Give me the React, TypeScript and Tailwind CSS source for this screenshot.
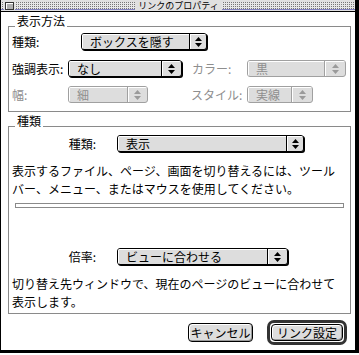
import React from "react";
import clsx from "clsx";

const font = "font-['Noto_Sans_CJK_JP','Noto_Sans',sans-serif]";

interface PopupProps {
  label: string;
  className: string;
  arrowClass: string;
  disabled?: boolean;
}

const Arrows: React.FC<{ color: string }> = ({ color }) => (
  <svg width="7" height="10" viewBox="0 0 7 10">
    <path d="M3.5 0L7 4H0z M0 6h7L3.5 10z" fill={color} />
  </svg>
);

const Popup: React.FC<PopupProps> = ({ label, className, arrowClass, disabled }) => {
  return (
    <div
      className={clsx(
        "flex h-[17px] shrink-0 overflow-hidden rounded-[3px] border bg-[#dddddd]",
        disabled
          ? "border-[#a0a0a0] text-[#8e8e8e]"
          : "border-black text-black shadow-[1px_1px_0_#000]",
        className
      )}
    >
      <div className="flex flex-1 items-center pl-[8px] text-[12px] leading-[15px] whitespace-nowrap shadow-[inset_1px_1px_0_#fff]">
        {label}
      </div>
      <div
        className={clsx(
          "flex items-center justify-center border-l shadow-[inset_1px_1px_0_#fff]",
          disabled ? "border-[#a0a0a0]" : "border-black",
          arrowClass
        )}
      >
        <Arrows color={disabled ? "#9a9a9a" : "#000"} />
      </div>
    </div>
  );
};

const Group: React.FC<{
  legend: string;
  className: string;
  children: React.ReactNode;
}> = ({ legend, className, children }) => (
  <div className={clsx("relative ml-[7px] w-[343px] border border-[#8a8a8a]", className)}>
    <span className="absolute left-[6px] top-[-12px] bg-white px-[2px] text-[12px] leading-[12px]">
      {legend}
    </span>
    {children}
  </div>
);

const Stripes: React.FC<{ className: string }> = ({ className }) => (
  <div
    className={clsx(
      "mt-[2px] h-[8px] border-b border-[#8080c0] bg-[conic-gradient(#777_25%,#e6e6e6_0)] bg-[length:2px_2px]",
      className
    )}
  />
);

export default function App() {
  return (
    <div className={clsx("h-[355px] w-[359px] overflow-hidden bg-white text-black", font)}>
      <div className="flex h-[353px] w-[359px] flex-col border-b-[3px] border-l border-r-4 border-black">
        {/* title bar */}
        <div className="flex h-[12px] shrink-0 border-b border-black bg-[#e0e0e0]">
          <div className="relative flex w-[134px]">
            <Stripes className="w-full" />
            <div className="absolute left-[3px] top-[1px] h-[10px] w-[11px] bg-[#e0e0e0] p-[1px]">
              <div className="h-full w-full border border-[#333] bg-[#b0b0b0] shadow-[inset_1px_1px_0_#fff]" />
            </div>
          </div>
          <div className="w-[87px] text-center text-[9px] leading-[11px] whitespace-nowrap">
            リンクのプロパティ
          </div>
          <Stripes className="flex-1" />
        </div>

        {/* 表示方法 */}
        <Group legend="表示方法" className="mt-[14px] h-[86px]">
          <div className="mt-[6px] flex items-center">
            <span className="w-[72px] pl-[3px] text-[12px] leading-[15px]">種類:</span>
            <Popup label="ボックスを隠す" className="w-[126px]" arrowClass="w-[17px]" />
          </div>
          <div className="mt-[10px] flex items-center">
            <span className="w-[59px] pl-[3px] text-[12px] leading-[15px] whitespace-nowrap">強調表示:</span>
            <Popup label="なし" className="w-[114px]" arrowClass="w-[20px]" />
            <span className="ml-[10px] w-[55px] text-[12px] leading-[15px] text-[#8e8e8e]">カラー:</span>
            <Popup label="黒" className="w-[99px]" arrowClass="w-[21px]" disabled />
          </div>
          <div className="mt-[9px] flex items-center">
            <span className="w-[59px] pl-[3px] text-[12px] leading-[15px] text-[#8e8e8e]">幅:</span>
            <Popup label="細" className="w-[80px]" arrowClass="w-[20px]" disabled />
            <span className="ml-[43px] w-[56px] text-[12px] leading-[15px] whitespace-nowrap text-[#8e8e8e]">
              スタイル:
            </span>
            <Popup label="実線" className="w-[66px]" arrowClass="w-[21px]" disabled />
          </div>
        </Group>

        {/* 種類 */}
        <Group legend="種類" className="mt-[14px] h-[188px]">
          <div className="mt-[8px] flex items-center">
            <span className="w-[87px] text-right text-[12px] leading-[15px]">種類:</span>
            <Popup label="表示" className="ml-[21px] w-[187px]" arrowClass="w-[17px]" />
          </div>
          <p className="mt-[10px] pl-[3px] text-[12px] leading-[18px] whitespace-nowrap">
            表示するファイル、ページ、画面を切り替えるには、ツール
            <br />
            バー、メニュー、またはマウスを使用してください。
          </p>
          <div className="ml-[6px] mt-[5px] h-[5px] w-[329px] border border-[#8a8a8a] bg-white" />
          <div className="mt-[40px] flex items-center">
            <span className="w-[87px] text-right text-[12px] leading-[15px]">倍率:</span>
            <Popup label="ビューに合わせる" className="ml-[21px] w-[171px]" arrowClass="w-[20px]" />
          </div>
          <p className="mt-[10px] pl-[3px] text-[12px] leading-[18px] whitespace-nowrap">
            切り替え先ウィンドウで、現在のページのビューに合わせて
            <br />
            表示します。
          </p>
        </Group>

        {/* buttons */}
        <div className="mr-[8px] mt-[6px] flex items-center justify-end gap-[14px]">
          <button className="flex h-[19px] w-[65px] items-center justify-center rounded-[4px] border border-black bg-[#dddddd] text-[12px] leading-[15px] shadow-[inset_1px_1px_0_#fff,inset_-1px_-1px_0_#999]">
            キャンセル
          </button>
          <div className="h-[25px] w-[80px] rounded-[7px] border-[3px] border-[#333] p-[1px]">
            <button className="flex h-full w-full items-center justify-center rounded-[4px] border border-black bg-[#dddddd] text-[12px] leading-[15px] shadow-[inset_1px_1px_0_#fff,inset_-1px_-1px_0_#999]">
              リンク設定
            </button>
          </div>
        </div>
      </div>
    </div>
  );
}
